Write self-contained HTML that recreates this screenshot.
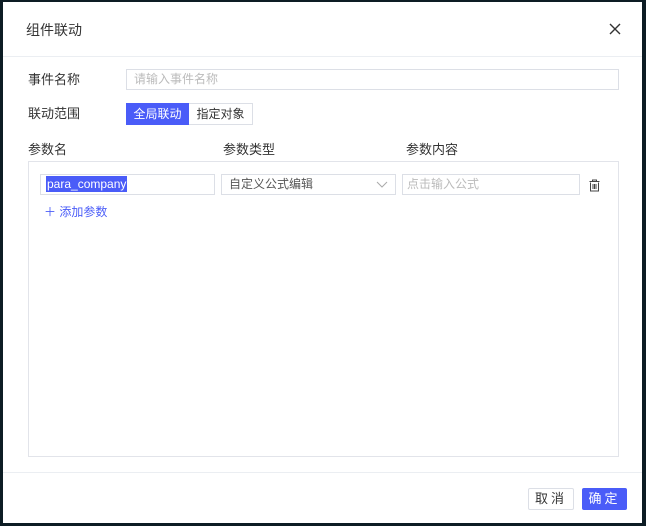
<!DOCTYPE html>
<html><head><meta charset="utf-8"><style>
*{box-sizing:border-box;margin:0;padding:0}
body{width:646px;height:526px;background:#0d1c24;position:relative;overflow:hidden;font-family:"Liberation Sans","Noto Sans CJK SC",sans-serif;font-size:12px;color:#333}
.dlg{position:absolute;left:3px;top:2px;width:639px;height:521px;background:#fff}
.a{position:absolute}
.lbl{font-size:13px;color:#333}
.inp{position:absolute;border:1px solid #dcdfe6;background:#fff;height:21px;font-size:12px;color:#bbb;padding:2px 7px;line-height:15px}
</style></head><body>
<div class="dlg">
<div class="a" style="left:23px;top:18px;font-size:14px;color:#333">组件联动</div>
<svg class="a" style="left:606px;top:21px" width="12" height="12"><path d="M1 1L11 11M11 1L1 11" stroke="#333" stroke-width="1.4"/></svg>
<div class="a" style="left:0;top:54px;width:639px;height:1px;background:#ebeef2"></div>
<div class="a lbl" style="left:25px;top:67px">事件名称</div>
<div class="inp" style="left:123px;top:67px;width:493px">请输入事件名称</div>
<div class="a lbl" style="left:25px;top:101px">联动范围</div>
<div class="a" style="left:123px;top:101px;width:63px;height:22px;background:#4a5cf8;color:#fff;font-size:12px;line-height:22px;text-align:center">全局联动</div>
<div class="a" style="left:186px;top:101px;width:64px;height:22px;border:1px solid #dcdfe6;border-left:none;color:#333;font-size:12px;line-height:20px;text-align:center">指定对象</div>
<div class="a lbl" style="left:25px;top:137px">参数名</div>
<div class="a lbl" style="left:220px;top:137px">参数类型</div>
<div class="a lbl" style="left:403px;top:137px">参数内容</div>
<div class="a" style="left:25px;top:159px;width:591px;height:296px;border:1px solid #e2e4ea"></div>
<div class="inp" style="left:37px;top:172px;width:175px;padding:2px 5px;color:#fff"><span style="background:#4a5cf8;padding:1px 1px">para_company</span></div>
<div class="inp" style="left:218px;top:172px;width:175px;color:#555">自定义公式编辑</div>
<svg class="a" style="left:373px;top:179px" width="12" height="8"><path d="M1 1L6 6L11 1" fill="none" stroke="#aaa" stroke-width="1"/></svg>
<div class="inp" style="left:399px;top:172px;width:178px;padding:2px 4px">点击输入公式</div>
<svg class="a" style="left:586px;top:177px" width="11" height="13"><path d="M0.5 2.5H10.5M3.5 2.5V1H7.5V2.5M1.5 3.5V12H9.5V3.5M4 5V10M5.5 5V10M7 5V10" fill="none" stroke="#444" stroke-width="1"/></svg>
<div class="a" style="left:41px;top:201px;color:#4a5cf8;font-size:12px">＋ 添加参数</div>
<div class="a" style="left:0;top:470px;width:639px;height:1px;background:#ebeef2"></div>
<div class="a" style="left:525px;top:486px;width:46px;height:22px;border:1px solid #dcdfe6;border-radius:2px;text-align:center;line-height:20px;font-size:13px;letter-spacing:3px;color:#333">取消</div>
<div class="a" style="left:579px;top:486px;width:45px;height:22px;background:#4a5cf8;border-radius:2px;text-align:center;line-height:22px;font-size:13px;letter-spacing:3px;color:#fff">确定</div>
</div>
</body></html>
